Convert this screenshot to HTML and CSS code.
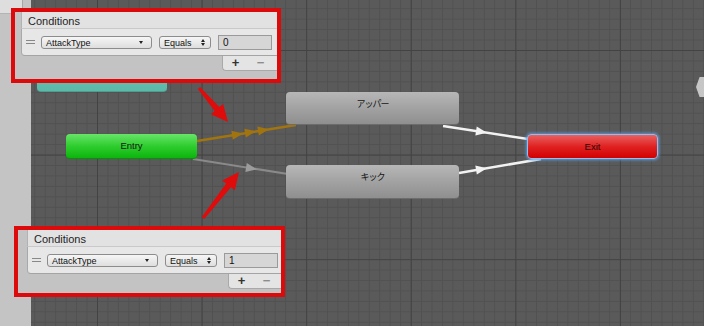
FILE: index.html
```html
<html>
    <head>
        <title>Animator</title>
        <link rel="stylesheet" href="styles.css">
    </head>
    <body>
        <div class="editor">
            <aside class="sidebar">
                <div class="sidebar-tab"></div>
            </aside>

            <main class="graph">
                <svg class="edges" width="673" height="326" viewBox="31 0 673 326">
                    <!-- Entry -> upper -->
                    <line x1="197" y1="141" x2="296" y2="125" stroke="#a2740f" stroke-width="2.5"/>
                    <g fill="#a2740f">
                        <polygon points="-5,-4.5 6,0 -5,4.5" transform="translate(237 134.5) rotate(-9.3)"/>
                        <polygon points="-5,-4.5 6,0 -5,4.5" transform="translate(250 132.3) rotate(-9.3)"/>
                        <polygon points="-5,-4.5 6,0 -5,4.5" transform="translate(263 130.2) rotate(-9.3)"/>
                    </g>
                    <!-- Entry -> kick -->
                    <line x1="193" y1="159" x2="288" y2="174" stroke="#8a8a8a" stroke-width="2"/>
                    <polygon points="-5,-4.5 6,0 -5,4.5" fill="#9c9c9c" transform="translate(251 168.3) rotate(9.2)"/>
                    <!-- upper -> Exit -->
                    <line x1="443" y1="126" x2="528" y2="139" stroke="#f2f2f2" stroke-width="2.5"/>
                    <polygon points="-5,-4.5 6,0 -5,4.5" fill="#f2f2f2" transform="translate(481 131.8) rotate(8.8)"/>
                    <!-- kick -> Exit -->
                    <line x1="459" y1="173" x2="541" y2="159" stroke="#f2f2f2" stroke-width="2.5"/>
                    <polygon points="-5,-4.5 6,0 -5,4.5" fill="#f2f2f2" transform="translate(481 169.2) rotate(-9.8)"/>
                </svg>

                <div class="node state-teal"></div>
                <div class="node entry">Entry</div>
                <div class="node state upper">アッパー</div>
                <div class="node state kick">キック</div>
                <div class="node exit">Exit</div>
                <div class="side-handle"></div>
            </main>

            <svg class="marks" width="704" height="326" viewBox="0 0 704 326">
                <polygon fill="#e00b0b" points="197.9,89 214.7,111 210.9,114.3 228,122 223.1,103.9 219.3,107.1 200.1,87"/>
                <polygon fill="#e00b0b" points="204.2,218.9 230.9,187.3 234.8,190.3 239,172 222.2,180.5 226.2,183.6 201.8,217.1"/>
            </svg>

            <div class="callout callout-top">
                <div class="conditions">
                    <div class="cond-head">Conditions</div>
                    <div class="cond-row">
                        <span class="handle"></span>
                        <span class="popup param">AttackType<span class="caret"></span></span>
                        <span class="popup mode">Equals<span class="updown"></span></span>
                        <span class="value">0</span>
                    </div>
                    <div class="cond-foot">
                        <span class="add">+</span>
                        <span class="remove">&minus;</span>
                    </div>
                </div>
            </div>

            <div class="callout callout-bottom">
                <div class="conditions">
                    <div class="cond-head">Conditions</div>
                    <div class="cond-row">
                        <span class="handle"></span>
                        <span class="popup param">AttackType<span class="caret"></span></span>
                        <span class="popup mode">Equals<span class="updown"></span></span>
                        <span class="value">1</span>
                    </div>
                    <div class="cond-foot">
                        <span class="add">+</span>
                        <span class="remove">&minus;</span>
                    </div>
                </div>
            </div>
        </div>
    </body>
</html>
```

FILE: styles.css
```css
* {
    box-sizing: border-box;
}

body {
    margin: 0;
    width: 704px;
    height: 326px;
    overflow: hidden;
    font-family: "Liberation Sans", Arial, sans-serif;
}

.editor {
    position: relative;
    display: flex;
    width: 704px;
    height: 326px;
}

.sidebar {
    width: 31px;
    background: #c4c4c4;
}

.sidebar-tab {
    width: 23px;
    height: 14px;
    background: #dedede;
    border-right: 1px solid #a6a6a6;
    border-bottom: 1px solid #b4b4b4;
}

.graph {
    position: relative;
    flex: 1;
    background-color: #5a5a5a;
    background-image:
        linear-gradient(90deg, #434343 1px, transparent 1px),
        linear-gradient(180deg, #434343 1px, transparent 1px),
        linear-gradient(90deg, #515151 1px, transparent 1px),
        linear-gradient(180deg, #515151 1px, transparent 1px);
    background-size: 104.6px 104.6px, 104.6px 104.6px, 10.46px 10.46px, 10.46px 10.46px;
    background-position: 66px 50px;
}

.edges {
    position: absolute;
    left: 0;
    top: 0;
}

/* state nodes */
.node {
    position: absolute;
    border-radius: 4px;
    font-size: 9.5px;
    color: #151515;
    text-align: center;
}

.state-teal {
    left: 6px;
    top: 60px;
    width: 130px;
    height: 32px;
    background: linear-gradient(#6ac6b5, #5cb8a8);
    border-bottom: 1px solid #4f9d90;
}

.entry {
    left: 35px;
    top: 134px;
    width: 131px;
    height: 25px;
    line-height: 24px;
    background: linear-gradient(#68e468, #2fcd2f 50%, #0cb50c);
    border-bottom: 1px solid #0a8f0a;
}

.state {
    left: 255px;
    width: 173px;
    padding-top: 5px;
    line-height: 13px;
    font-family: "Noto Sans CJK JP", sans-serif;
    font-size: 9px;
    letter-spacing: -1px;
    background: linear-gradient(#b7b7b7, #a2a2a2 50%, #8f8f8f);
    border-bottom: 1px solid #6c6c6c;
}

.upper {
    top: 92px;
    height: 33px;
}

.kick {
    top: 165px;
    height: 34px;
}

.exit {
    left: 496px;
    top: 134px;
    width: 131px;
    height: 25px;
    line-height: 23px;
    color: #2a0404;
    background: linear-gradient(#e96060, #e02222 50%, #d20000);
    border: 1px solid #8fbef0;
    box-shadow: 0 0 3px 1px #5f9ad8;
}

.side-handle {
    position: absolute;
    right: 0;
    top: 77px;
    width: 8px;
    height: 20px;
    background: #c6c6c6;
    clip-path: polygon(0 50%, 45% 0, 100% 0, 100% 100%, 45% 100%);
}

.marks {
    position: absolute;
    left: 0;
    top: 0;
}

/* red callouts with the condition lists */
.callout {
    position: absolute;
    border: 4px solid #dc0a0a;
    background: #c3c3c3;
    overflow: hidden;
}

.callout-top {
    left: 11px;
    top: 8px;
    width: 270px;
    height: 75px;
    padding-left: 6px;
}

.callout-bottom {
    left: 14px;
    top: 226px;
    width: 271px;
    height: 71px;
    padding-left: 9px;
}

.conditions {
    width: 262px;
}

.cond-head {
    height: 17px;
    padding-left: 6px;
    padding-top: 2px;
    line-height: 15px;
    font-size: 11px;
    color: #1e1e1e;
    background: #e2e2e2;
    border-left: 1px solid #b2b2b2;
    border-bottom: 1px solid #c9c9c9;
}

.cond-row {
    display: flex;
    align-items: center;
    height: 27px;
    padding-left: 4px;
    background: #e7e7e7;
    border-left: 1px solid #a9a9a9;
    border-bottom: 1px solid #a4a4a4;
    border-bottom-left-radius: 4px;
}

.handle {
    width: 9px;
    height: 4px;
    margin-right: 6px;
    border-top: 1px solid #888;
    border-bottom: 1px solid #888;
}

.popup {
    position: relative;
    height: 13px;
    padding-left: 4px;
    line-height: 12px;
    font-size: 9px;
    color: #111;
    background: linear-gradient(#f6f6f6, #dedede);
    border: 1px solid #8c8c8c;
    border-radius: 3px;
}

.param {
    width: 111px;
    margin-right: 7px;
}

.mode {
    width: 52px;
    margin-right: 7px;
}

.caret {
    position: absolute;
    right: 8px;
    top: 4px;
    border-left: 2.5px solid transparent;
    border-right: 2.5px solid transparent;
    border-top: 3px solid #222;
}

.updown {
    position: absolute;
    right: 5px;
    top: 2px;
    width: 4px;
    height: 7px;
}

.updown::before,
.updown::after {
    content: "";
    position: absolute;
    left: 0;
    border-left: 2px solid transparent;
    border-right: 2px solid transparent;
}

.updown::before {
    top: 0;
    border-bottom: 3px solid #222;
}

.updown::after {
    bottom: 0;
    border-top: 3px solid #222;
}

.value {
    width: 54px;
    height: 15px;
    padding-left: 4px;
    line-height: 14px;
    font-size: 10px;
    color: #111;
    background: #d6d6d6;
    border: 1px solid #9a9a9a;
}

.cond-foot {
    display: flex;
    width: 61px;
    height: 15px;
    margin-left: 201px;
    background: #e4e4e4;
    border-left: 1px solid #a9a9a9;
    border-bottom: 1px solid #a9a9a9;
    border-bottom-left-radius: 4px;
}

.cond-foot span {
    width: 25px;
    text-align: center;
    line-height: 14px;
    font-size: 13px;
    font-weight: bold;
}

.add {
    color: #333;
}

.remove {
    color: #8c8c8c;
}
```
